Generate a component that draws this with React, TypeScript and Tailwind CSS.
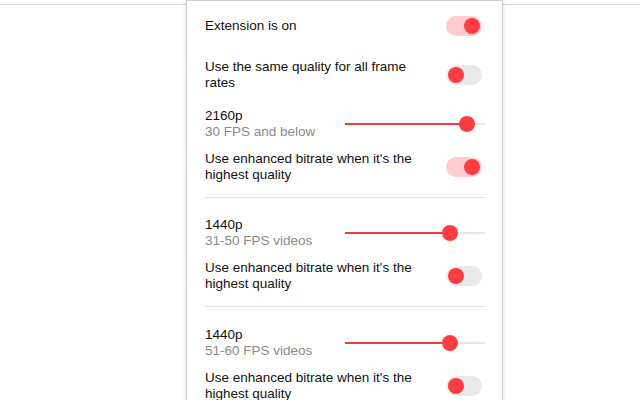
import React from 'react';

type ToggleProps = { on: boolean };

const Toggle = ({ on }: ToggleProps) => (
	<div
		className={
			on
				? 'relative h-5 w-9 shrink-0 rounded-full bg-[#ffcdcd]'
				: 'relative h-5 w-9 shrink-0 rounded-full bg-[#e9e9e9]'
		}
	>
		<div
			className={
				on
					? 'absolute top-[2px] left-[18px] h-4 w-4 rounded-full bg-[#fb3d43]'
					: 'absolute top-[2px] left-[2px] h-4 w-4 rounded-full bg-[#fb3d43]'
			}
		/>
	</div>
);

type SliderProps = { pos: number };

const Slider = ({ pos }: SliderProps) => (
	<div className="relative h-4 w-[140px] shrink-0">
		<div className="absolute top-[7px] left-0 h-[2px] w-full bg-[#e6e6e6]" />
		<div className="absolute top-[7px] left-0 h-[2px] bg-[#f2393f]" style={{ width: pos }} />
		<div
			className="absolute top-0 h-4 w-4 rounded-full bg-[#fb3d43]"
			style={{ left: pos - 8 }}
		/>
	</div>
);

type Quality = { res: string; fps: string; pos: number; enhanced: boolean };

const qualities: Quality[] = [
	{ res: '2160p', fps: '30 FPS and below', pos: 122, enhanced: true },
	{ res: '1440p', fps: '31-50 FPS videos', pos: 105, enhanced: false },
	{ res: '1440p', fps: '51-60 FPS videos', pos: 105, enhanced: false },
];

const QualityBlock = ({ q, last }: { q: Quality; last: boolean }) => (
	<div className={last ? 'flex flex-col pt-[1px]' : 'flex flex-col border-b border-[#e3e3e3] pb-[14px]'}>
		<div className="flex items-center justify-between">
			<div className="flex flex-col leading-4">
				<span>{q.res}</span>
				<span className="text-[#8a8a8a]">{q.fps}</span>
			</div>
			<Slider pos={q.pos} />
		</div>
		<div className="mt-[11px] flex items-center justify-between pr-[3px]">
			<span className="w-[230px] leading-4">Use enhanced bitrate when it's the highest quality</span>
			<Toggle on={q.enhanced} />
		</div>
	</div>
);

export default function App() {
	return (
		<div className="relative h-[400px] w-[640px] overflow-hidden bg-white font-['Liberation_Sans',Arial,sans-serif] text-[13.5px] text-[#111]">
			<div className="mt-1 border-t border-[#d6d6d6]" />
			<div className="absolute top-0 left-[186px] w-[317px] h-[420px] border border-[#cfcfcf] bg-white pl-[18px] pr-[17px] pt-[15px] shadow-[0_0_4px_rgba(0,0,0,0.15)]">
				<div className="flex items-center justify-between pr-[3px]">
					<span>Extension is on</span>
					<Toggle on />
				</div>
				<div className="mt-[23px] flex items-center justify-between pr-[3px]">
					<span className="w-[220px] leading-4">Use the same quality for all frame rates</span>
					<Toggle on={false} />
				</div>
				<div className="mt-[17px] flex flex-col gap-[19px]">
					{qualities.map((q, i) => (
						<QualityBlock key={i} q={q} last={i === qualities.length - 1} />
					))}
				</div>
			</div>
		</div>
	);
}
